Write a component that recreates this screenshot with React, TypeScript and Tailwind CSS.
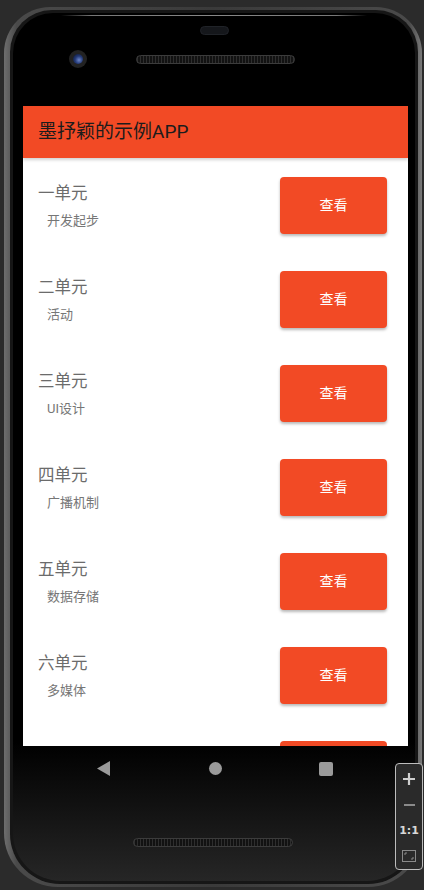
import React from 'react';

const units = [
  { title: '一单元', sub: '开发起步' },
  { title: '二单元', sub: '活动' },
  { title: '三单元', sub: 'UI设计' },
  { title: '四单元', sub: '广播机制' },
  { title: '五单元', sub: '数据存储' },
  { title: '六单元', sub: '多媒体' },
];

const font = { fontFamily: 'Roboto, "Noto Sans CJK SC", sans-serif' };

function UnitRow({ title, sub }: { title: string; sub: string }) {
  return (
    <div className="flex justify-between items-start h-[94px] shrink-0 pl-[15px] pr-[21px]">
      <div className="pt-[25px]">
        <div className="text-[16.5px] leading-[22px] text-[#6b6b6b]">{title}</div>
        <div className="pl-[9px] mt-[7px] text-[13px] leading-[18px] text-[#767676]">{sub}</div>
      </div>
      <button className="mt-[19px] w-[107px] h-[57px] rounded-[4px] bg-[#F24A25] text-white text-[14px] shadow-[0_2px_3px_rgba(0,0,0,0.28)] flex items-center justify-center">
        查看
      </button>
    </div>
  );
}

export default function App() {
  return (
    <div className="relative w-[424px] h-[890px] overflow-hidden bg-[#2b2b2b] pt-[7px] pl-[4px]" style={font}>
      {/* phone rim */}
      <div className="w-[418px] h-[880px] rounded-t-[46px] rounded-b-[54px] pl-[6px] pr-[4px] py-[3px] bg-[linear-gradient(90deg,#6e6e6e_0%,#4a4a4a_3%,#3a3a3a_50%,#4a4a4a_97%,#7a7a7a_100%)]">
        <div className="h-full rounded-t-[42px] rounded-b-[50px] bg-[#161616] p-[3px]">
          <div className="h-full rounded-t-[40px] rounded-b-[48px] bg-[linear-gradient(to_bottom,#000_0%,#000_84%,#262626_100%)] flex flex-col overflow-hidden">
            {/* top bezel */}
            <div className="h-[93px] shrink-0 flex flex-col">
              <div className="mt-[2px] mx-[48px] h-[1px] bg-[linear-gradient(90deg,transparent,#777_10%,#888_50%,#777_90%,transparent)]" />
              <div className="mt-[10px] mx-auto w-[29px] h-[9px] rounded-full bg-[#15171b] border border-[#202328]" />
              <div className="mt-[15px] flex items-center">
                <div className="ml-[56px] w-[18px] h-[18px] rounded-full bg-[#222] flex items-center justify-center">
                  <div className="w-[10px] h-[10px] rounded-full bg-[radial-gradient(circle_at_60%_60%,#6d86c8_0%,#243a78_45%,#0a0f1e_100%)]" />
                </div>
                <div className="ml-[49px] w-[159px] h-[9px] rounded-full border border-[#3c3c3c] bg-[repeating-linear-gradient(90deg,#2e2e2e_0px,#2e2e2e_1px,#121212_1px,#121212_3px)]" />
              </div>
            </div>

            {/* screen */}
            <div className="ml-[10px] w-[385px] h-[640px] shrink-0 bg-white flex flex-col overflow-hidden">
              <div className="h-[52px] shrink-0 bg-[#F24A25] flex items-center pl-[15px] shadow-[0_2px_3px_rgba(0,0,0,0.18)] z-10">
                <span className="text-[19px] text-[#1c1c1c]">墨抒颖的示例APP</span>
              </div>
              <div className="flex flex-col">
                {units.map((u) => (
                  <UnitRow key={u.title} title={u.title} sub={u.sub} />
                ))}
                {/* next row, only its button's top shows */}
                <div className="flex justify-end pr-[21px]">
                  <div className="mt-[19px] w-[107px] h-[57px] rounded-[4px] bg-[#F24A25]" />
                </div>
              </div>
            </div>

            {/* nav bar */}
            <div className="mt-[15px] flex items-center h-[15px]">
              <svg className="ml-[84px]" width="13" height="15" viewBox="0 0 13 15">
                <polygon points="13,0 13,15 0,7.5" fill="#9a9a9a" />
              </svg>
              <div className="ml-[99px] w-[13px] h-[13px] rounded-full bg-[#9a9a9a]" />
              <div className="ml-[97px] w-[14px] h-[14px] rounded-[2px] bg-[#9a9a9a]" />
            </div>

            {/* bottom speaker */}
            <div className="mt-[62px] ml-[120px] w-[160px] h-[9px] rounded-full border border-[#3c3c3c] bg-[repeating-linear-gradient(90deg,#2e2e2e_0px,#2e2e2e_1px,#121212_1px,#121212_3px)]" />
          </div>
        </div>
      </div>

      {/* emulator zoom controls */}
      <div className="absolute left-[395px] top-[763px] w-[28px] h-[107px] rounded-[4px] border border-[#bdbdbd] bg-[#2a2a2a] flex flex-col items-center pt-[2px]">
        <div className="h-[26px] flex items-center">
          <svg width="12" height="12" viewBox="0 0 12 12">
            <path d="M6 0V12M0 6H12" stroke="#cfcfcf" strokeWidth="2.2" />
          </svg>
        </div>
        <div className="h-[26px] flex items-center">
          <div className="w-[11px] h-[2px] bg-[#8a8a8a]" />
        </div>
        <div className="h-[26px] flex items-center text-[#d8d8d8] text-[11px] font-bold leading-none" style={{ fontFamily: '"DejaVu Sans", sans-serif' }}>1:1</div>
        <div className="h-[26px] flex items-center">
          <svg width="14" height="12" viewBox="0 0 14 12">
            <rect x="0.5" y="0.5" width="13" height="11" fill="none" stroke="#8a8a8a" />
            <path d="M3 5V3H5M9 9H11V7" fill="none" stroke="#8a8a8a" />
          </svg>
        </div>
      </div>
    </div>
  );
}
